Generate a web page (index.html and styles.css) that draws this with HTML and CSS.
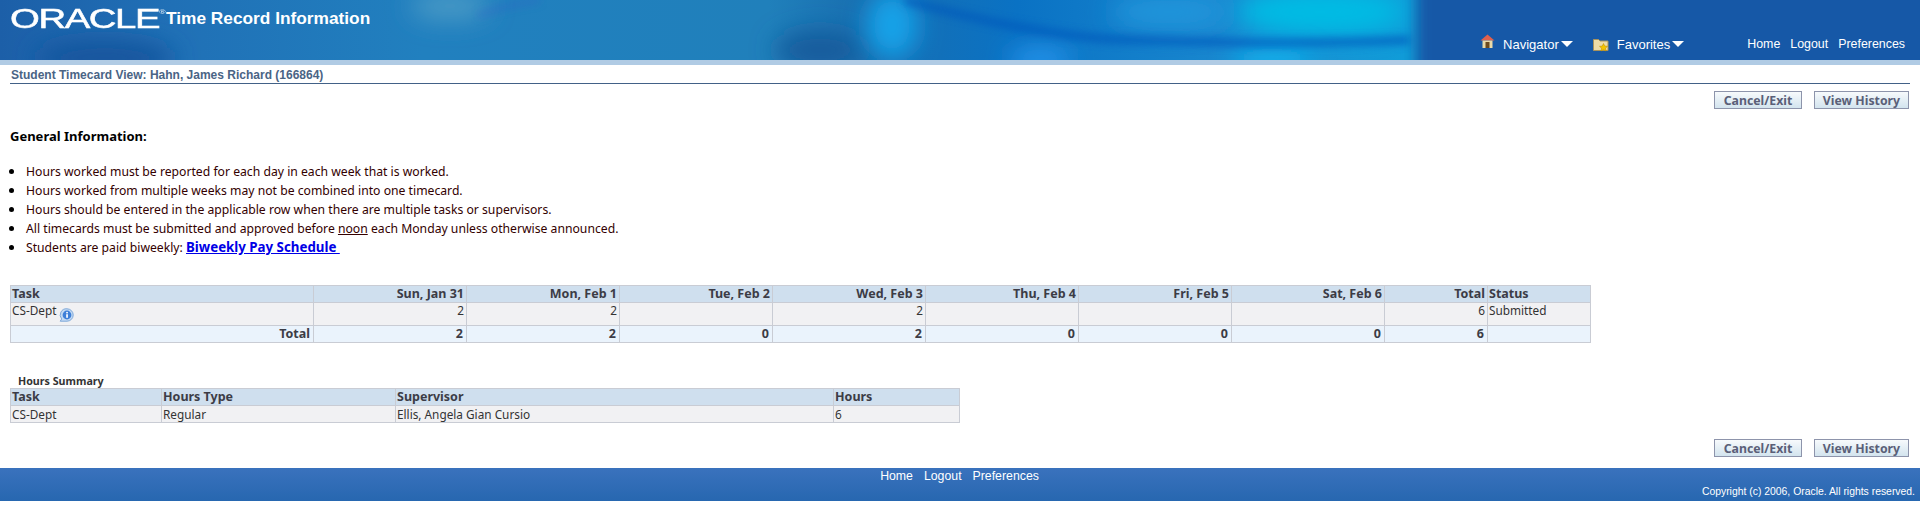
FILE: index.html
```html
<!DOCTYPE html>
<html lang="en">
<head>
  <meta charset="UTF-8">
  <title>Time Record Information</title>
  <link rel="stylesheet" href="styles.css">
</head>
<body>
  <div class="banner">
    <svg class="banner-art" width="1920" height="60" viewBox="0 0 1920 60">
      <defs>
        <linearGradient id="sky" x1="0" x2="1" y1="0" y2="0">
          <stop offset="0" stop-color="#1c5fa8"/>
          <stop offset=".09" stop-color="#2070b6"/>
          <stop offset=".22" stop-color="#2180bf"/>
          <stop offset=".4" stop-color="#2080bb"/>
          <stop offset=".45" stop-color="#186eb0"/>
          <stop offset=".53" stop-color="#0a72c4"/>
          <stop offset=".65" stop-color="#1a8ad0"/>
          <stop offset=".73" stop-color="#109cd8"/>
        </linearGradient>
        <filter id="soft" x="-50%" y="-100%" width="200%" height="300%"><feGaussianBlur stdDeviation="12"/></filter>
        <filter id="wave" x="-10%" y="-100%" width="120%" height="300%"><feGaussianBlur stdDeviation="4"/></filter>
        <filter id="edge" x="-10%" y="-60%" width="120%" height="220%"><feGaussianBlur stdDeviation="7"/></filter>
      </defs>
      <rect width="1920" height="60" fill="url(#sky)"/>
      <ellipse cx="105" cy="58" rx="70" ry="18" fill="#17559d" filter="url(#soft)"/>
      <ellipse cx="450" cy="6" rx="40" ry="14" fill="#4a9ac6" filter="url(#soft)"/>
      <path d="M478 16 C495 8 515 4 540 0" stroke="#3060c8" stroke-width="4" fill="none" opacity=".55" filter="url(#wave)"/>
      <ellipse cx="820" cy="50" rx="45" ry="20" fill="#135c9c" filter="url(#soft)"/>
      <ellipse cx="892" cy="25" rx="26" ry="34" fill="#18a2e8" filter="url(#soft)"/>
      <ellipse cx="1320" cy="12" rx="85" ry="24" fill="#02bce4" filter="url(#soft)"/>
      <ellipse cx="1170" cy="12" rx="60" ry="16" fill="#2096dc" filter="url(#soft)"/>
      <ellipse cx="1040" cy="60" rx="32" ry="12" fill="#2896ee" filter="url(#soft)"/>
      <ellipse cx="1272" cy="60" rx="40" ry="12" fill="#10b4ee" filter="url(#soft)"/>
      <path d="M905 0 C975 20 1060 38 1130 40 S1300 45 1410 40" stroke="#0658bc" stroke-width="7" fill="none" opacity=".85" filter="url(#wave)"/>
      <rect x="1416" y="-20" width="520" height="100" fill="#1558a7" filter="url(#edge)"/>
    </svg>
    <div class="brand">
      <span class="logo">ORACLE<sup>®</sup></span>
      <span class="app-title">Time Record Information</span>
    </div>
    <div class="global-nav">
      <a class="nav-menu nav-home">
        <svg width="15" height="15" viewBox="0 0 15 15"><path d="M7.5 .5 14.500 6.500H.5z" fill="#e0604c"/><rect x="2.500" y="6.500" width="10" height="7.500" fill="#e9d9a8"/><rect x="5.500" y="8" width="4" height="6" fill="#6b4a1e"/></svg>
        Navigator<i class="caret"></i>
      </a>
      <a class="nav-menu nav-fav">
        <svg width="16" height="15" viewBox="0 0 16 15"><path d="M.5 2.500h5l1.500 1.500h8v9.500H.5z" fill="#efdca6" stroke="#a8925c"/><path d="M10.500 6.500l1.200 2.500 2.800.3-2 1.900.5 2.800-2.500-1.300-2.500 1.300.5-2.800-2-1.900 2.800-.3z" fill="#f5c400" stroke="#b58a00" stroke-width=".5"/></svg>
        Favorites<i class="caret"></i>
      </a>
      <a class="nav-link">Home</a>
      <a class="nav-link">Logout</a>
      <a class="nav-link">Preferences</a>
    </div>
  </div>
  <div class="strip"></div>

  <div class="content">
    <h1 class="page-title">Student Timecard View: Hahn, James Richard (166864)</h1>
    <div class="actions">
      <button class="btn btn-cancel">Cancel/Exit</button>
      <button class="btn btn-history">View History</button>
    </div>

    <h2 class="info-head">General Information:</h2>
    <ul class="info-list">
      <li>Hours worked must be reported for each day in each week that is worked.</li>
      <li>Hours worked from multiple weeks may not be combined into one timecard.</li>
      <li>Hours should be entered in the applicable row when there are multiple tasks or supervisors.</li>
      <li>All timecards must be submitted and approved before <u>noon</u> each Monday unless otherwise announced.</li>
      <li>Students are paid biweekly: <a class="pay-link" href="#">Biweekly Pay Schedule&nbsp;</a></li>
    </ul>

    <table class="grid week-grid">
      <colgroup>
        <col class="c-task"><col class="c-day"><col class="c-day"><col class="c-day"><col class="c-day"><col class="c-day"><col class="c-day"><col class="c-day"><col class="c-total"><col class="c-status">
      </colgroup>
      <tr>
        <th>Task</th><th class="num">Sun, Jan 31</th><th class="num">Mon, Feb 1</th><th class="num">Tue, Feb 2</th><th class="num">Wed, Feb 3</th><th class="num">Thu, Feb 4</th><th class="num">Fri, Feb 5</th><th class="num">Sat, Feb 6</th><th class="num">Total</th><th>Status</th>
      </tr>
      <tr class="entry">
        <td>CS-Dept<svg class="info-icon" width="15" height="15" viewBox="0 0 15 15"><path d="M8 .8a6.200 6.200 0 0 1 0 12.400H1.200l1.500-2.200A6.200 6.200 0 0 1 8 .8z" fill="#c3daf3" stroke="#7fa9da"/><circle cx="8" cy="7" r="4.400" fill="#3d7fd8"/><rect x="7.200" y="6.200" width="1.700" height="3.600" fill="#fff"/><rect x="7.200" y="3.900" width="1.700" height="1.500" fill="#fff"/></svg></td>
        <td class="num">2</td><td class="num">2</td><td class="num"></td><td class="num">2</td><td class="num"></td><td class="num"></td><td class="num"></td><td class="num">6</td><td>Submitted</td>
      </tr>
      <tr class="totals">
        <td class="num">Total</td><td class="num">2</td><td class="num">2</td><td class="num">0</td><td class="num">2</td><td class="num">0</td><td class="num">0</td><td class="num">0</td><td class="num">6</td><td></td>
      </tr>
    </table>

    <div class="summary-head">Hours Summary</div>
    <table class="grid summary-grid">
      <colgroup>
        <col class="s-task"><col class="s-type"><col class="s-super"><col class="s-hours">
      </colgroup>
      <tr><th>Task</th><th>Hours Type</th><th>Supervisor</th><th>Hours</th></tr>
      <tr class="entry"><td>CS-Dept</td><td>Regular</td><td>Ellis, Angela Gian Cursio</td><td>6</td></tr>
    </table>

    <div class="actions actions-bottom">
      <button class="btn btn-cancel">Cancel/Exit</button>
      <button class="btn btn-history">View History</button>
    </div>
  </div>

  <div class="footer">
    <div class="footer-links">
      <a>Home</a><a>Logout</a><a>Preferences</a>
    </div>
    <div class="copyright">Copyright (c) 2006, Oracle. All rights reserved.</div>
  </div>
</body>
</html>
```
FILE: styles.css
```css
html, body { margin: 0; padding: 0; background: #fff; }
body { font-family: "Noto Sans", Tahoma, sans-serif; font-size: 12.2px; color: #000; height: 526px; overflow: hidden; }

.banner { position: relative; height: 60px; display: flex; justify-content: space-between; color: #fff; font-family: "Liberation Sans", Arial, sans-serif; background: #1558a7; overflow: hidden; }
.banner-art { position: absolute; left: 0; top: 0; }
.brand { position: relative; display: flex; align-items: flex-start; padding: 6px 0 0 10px; }
.logo { font-size: 27px; line-height: 26px; letter-spacing: -1px; -webkit-text-stroke: .5px #fff; transform: scaleX(1.42); transform-origin: left top; width: 156px; white-space: nowrap; }
.logo sup { font-size: 6px; vertical-align: 14px; line-height: 0; -webkit-text-stroke: 0; }
.app-title { font-size: 17.3px; font-weight: bold; line-height: 26px; margin-top: -1px; }
.global-nav { position: relative; display: flex; align-items: center; height: 24px; margin-top: 32px; padding-right: 15px; font-size: 12.4px; }
.nav-menu { display: flex; align-items: center; font-size: 13px; }
.nav-home svg { margin-right: 8px; margin-top: -6px; }
.nav-fav svg { margin-right: 8px; }
.nav-home { margin-right: 20px; }
.nav-fav { margin-right: 53px; }
.nav-link { margin-left: 10px; }
.nav-link:first-of-type { margin-left: 0; }
.caret { display: inline-block; border-left: 6px solid transparent; border-right: 6px solid transparent; border-top: 6px solid #fff; margin-left: 2px; }
.strip { height: 5px; background: #b0cbe4; }

.content { padding: 0 10px; }
.page-title { margin: 0; padding: 4px 0 2px 1px; height: 12px; line-height: 12px; font-family: "Liberation Sans", Arial, sans-serif; font-size: 12px; font-weight: bold; color: #4a6485; border-bottom: 1px solid #426187; }
.actions { display: flex; justify-content: flex-end; gap: 12px; margin-top: 7px; padding-right: 1px; }
.btn { height: 18px; padding: 0; border: 1px solid #8d94ab; background: linear-gradient(#f7fafc, #d3e4ee); color: #5a5f78; font-family: "Noto Sans", Tahoma, sans-serif; font-size: 12.3px; font-weight: bold; line-height: 15px; }
.btn-cancel { width: 88px; }
.btn-history { width: 95px; }

.info-head { margin: 19px 0 0; font-size: 13px; line-height: 16px; font-weight: bold; }
.info-list { margin: 17px 0 0; padding: 0 0 0 16px; list-style: disc; font-size: 12.2px; }
.info-list li { height: 19px; line-height: 19px; color: #330000; }
.info-list li::marker { font-size: 15px; color: #000; }
.pay-link { color: #0000e6; font-weight: bold; font-size: 13.3px; }

.grid { border-collapse: collapse; table-layout: fixed; font-size: 11.8px; color: #333; }
.grid th, .grid td { border: 1px solid #c9ccd4; padding: 0 2px 0 1px; text-align: left; vertical-align: top; overflow: hidden; white-space: nowrap; }
.grid th { height: 16px; line-height: 16px; background: #cfdfee; font-size: 12.5px; font-weight: bold; color: #3c3c46; }
.grid .num { text-align: right; }
.entry td { background: #f1f1f3; line-height: 15px; }
.week-grid { width: 1581px; margin-top: 29px; }
.c-task { width: 303px; }
.c-day { width: 153px; }
.c-total { width: 103px; }
.c-status { width: 103px; }
.week-grid .entry td { height: 22px; }
.totals td { height: 16px; line-height: 16px; background: #eaf3fc; font-size: 12.5px; font-weight: bold; color: #3c3c46; }
.grid .totals .num { padding-right: 3px; }
.info-icon { vertical-align: top; margin: 5px 0 0 2px; }

.summary-head { margin: 32px 0 0 8px; height: 13px; line-height: 13px; font-size: 10.7px; font-weight: bold; color: #333; }
.summary-grid { width: 949px; }
.s-task { width: 151px; }
.s-type { width: 234px; }
.s-super { width: 438px; }
.s-hours { width: 126px; }
.summary-grid .entry td { height: 16px; line-height: 16px; }
.actions-bottom { margin-top: 16px; }

.footer { position: relative; height: 33px; margin-top: 11px; background: linear-gradient(#3a72bd, #2767b0); color: #fff; font-family: "Liberation Sans", Arial, sans-serif; }
.footer-links { display: flex; justify-content: center; gap: 11px; font-size: 12.3px; line-height: 14px; padding-top: 1px; margin-right: 1px; }
.copyright { position: absolute; right: 5px; bottom: 3px; font-size: 10.4px; line-height: 12px; }
```
